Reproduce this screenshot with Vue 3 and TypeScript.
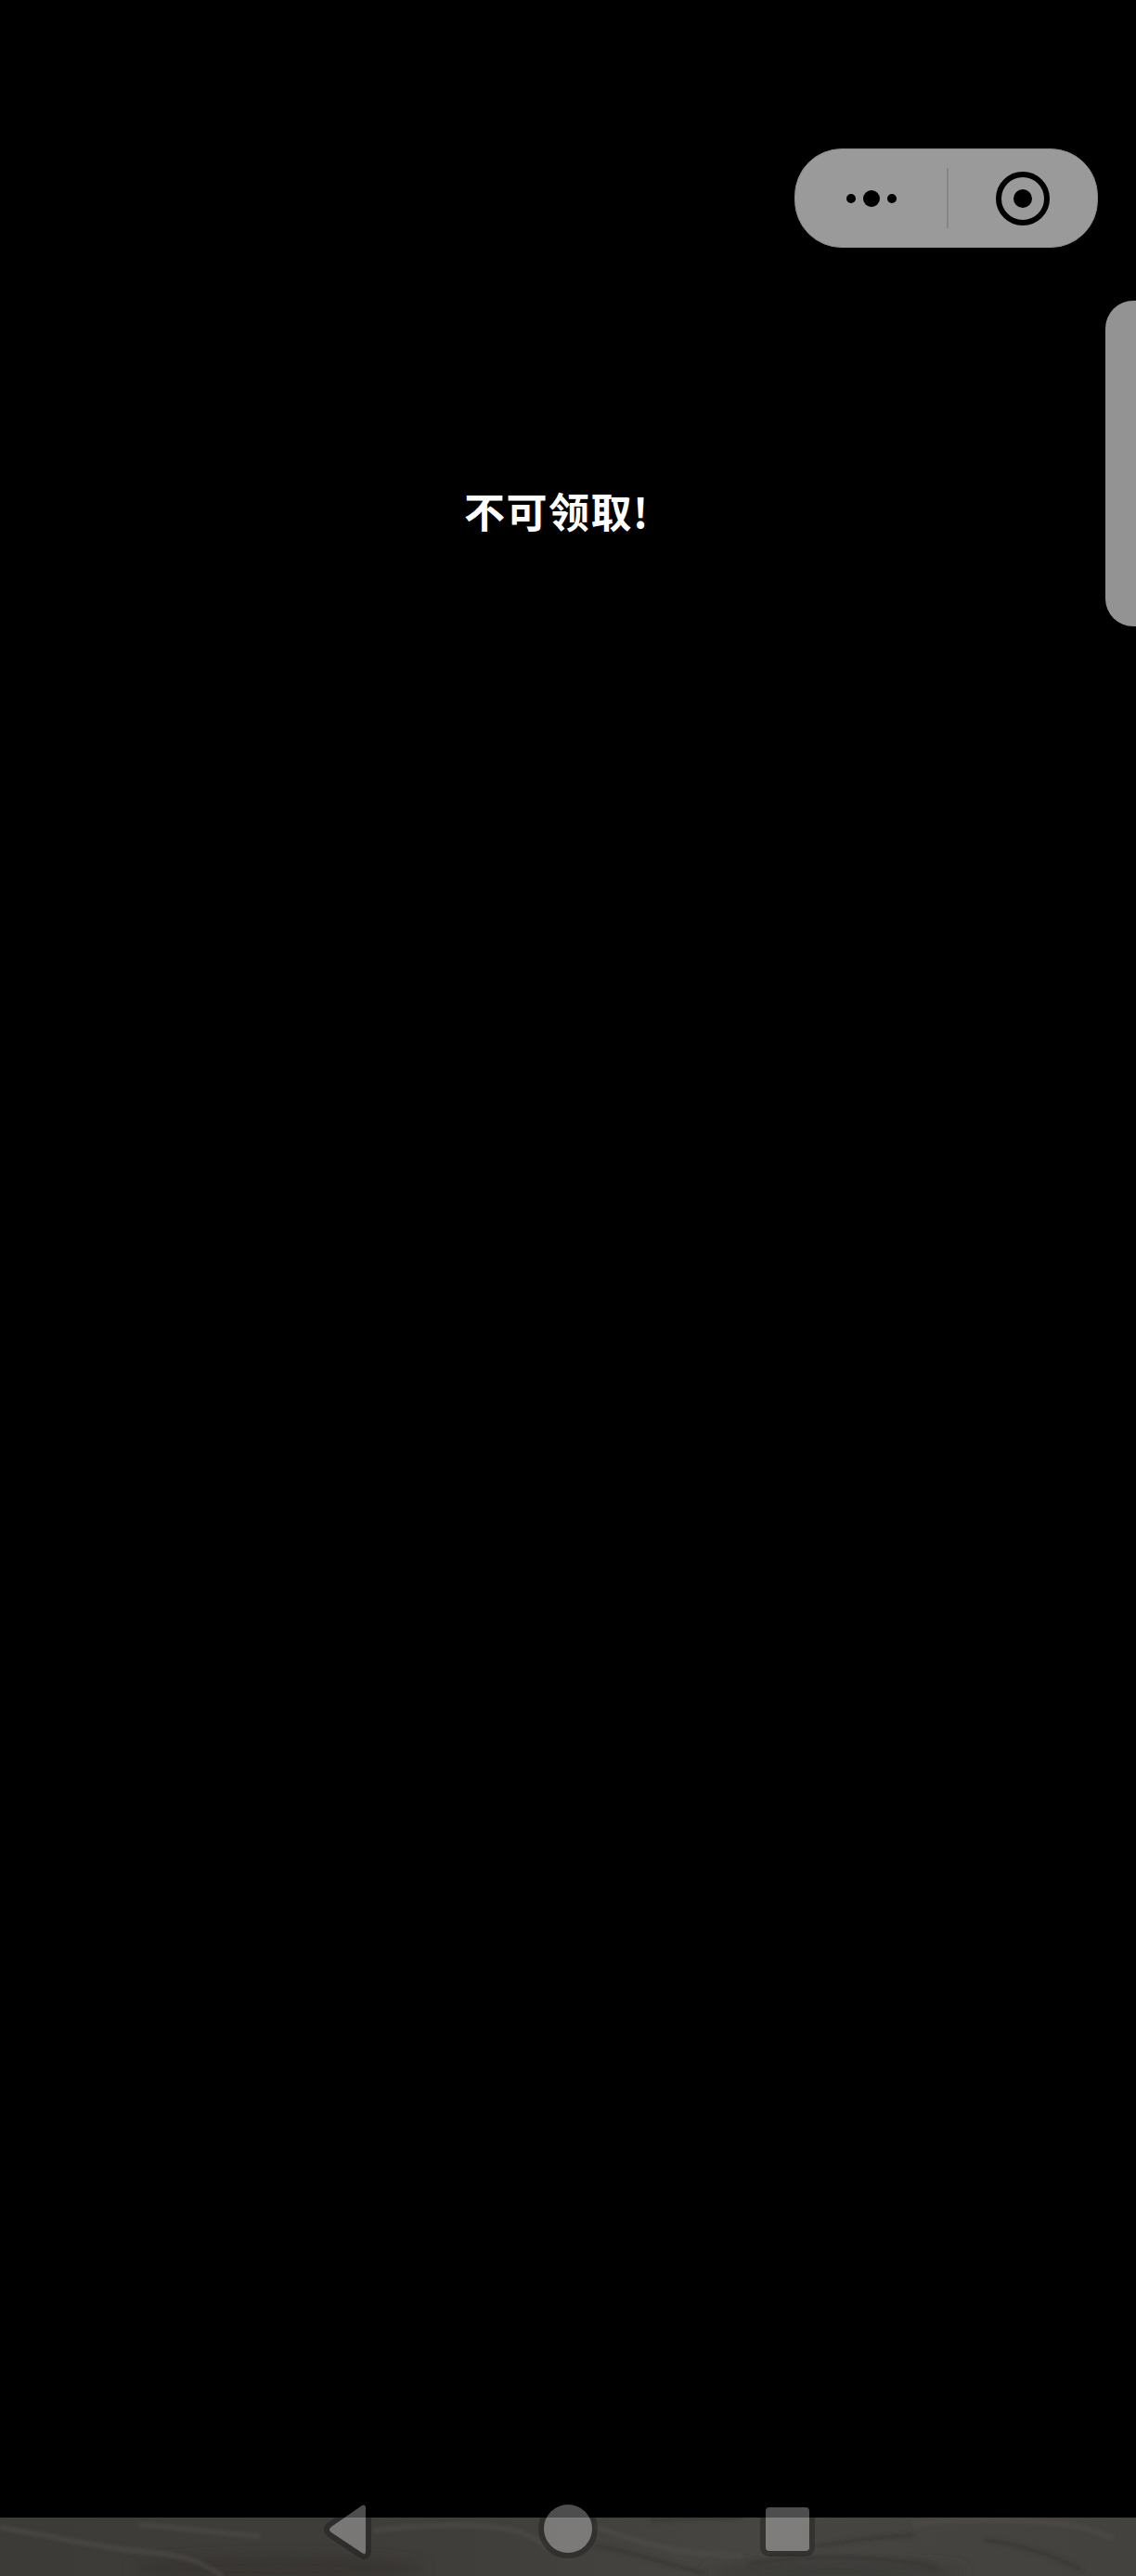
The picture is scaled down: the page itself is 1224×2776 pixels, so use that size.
<script setup lang="ts">
const lightStreaks: string[] = [
  'M0 11 C50 18 90 30 150 36 S215 48 240 63',
  'M402 14 C450 8 500 7 530 10 S575 20 590 33',
  'M983 7 C1020 2 1080 1 1125 5 S1170 12 1200 22',
  'M150 8 C190 10 230 16 280 20',
  'M640 10 C700 30 740 42 800 40',
]
const darkStreaks: string[] = [
  'M881 31 C910 26 940 21 985 19',
  'M1061 24 C1090 28 1130 38 1166 57',
  'M807 50 C840 44 900 40 960 46 S990 52 1010 56',
  'M700 4 C740 0 760 2 800 0',
  'M640 30 C680 36 700 46 760 60',
]
const triangle = 'M390 3 Q394 1 394 6 L394 52 Q394 57 390 54 L357 32 Q353 29 357 26 Z'
</script>

<template>
  <div class="page">
    <main class="screen">
      <div class="capsule">
        <div class="capsule-side capsule-more">
          <span class="dot"></span>
          <span class="dot dot-big"></span>
          <span class="dot"></span>
        </div>
        <div class="capsule-rule"></div>
        <div class="capsule-side capsule-target">
          <span class="target-ring"><span class="target-core"></span></span>
        </div>
      </div>
      <div class="side-tab"></div>
      <p class="message">不可领取!</p>
    </main>

    <footer class="navbar">
      <svg class="wallpaper" viewBox="0 0 1224 63" preserveAspectRatio="none" aria-hidden="true">
        <defs>
          <linearGradient id="strip" x1="0" x2="1" y1="0" y2="0">
            <stop offset="0" stop-color="#3c3b38" />
            <stop offset="0.4" stop-color="#403e3b" />
            <stop offset="0.65" stop-color="#474542" />
            <stop offset="1" stop-color="#44423f" />
          </linearGradient>
          <filter id="soft" x="-5%" y="-50%" width="110%" height="200%">
            <feGaussianBlur stdDeviation="2.2" />
          </filter>
          <filter id="softer" x="-5%" y="-50%" width="110%" height="200%">
            <feGaussianBlur stdDeviation="7" />
          </filter>
        </defs>
        <rect width="1224" height="63" fill="url(#strip)" />
        <ellipse cx="300" cy="55" rx="160" ry="14" fill="#373633" filter="url(#softer)" />
        <ellipse cx="900" cy="58" rx="140" ry="10" fill="#3b3a37" filter="url(#softer)" />
        <g fill="none" filter="url(#soft)">
          <path v-for="d in lightStreaks" :key="d" :d="d" stroke="#4f4d49" stroke-width="3" />
          <path v-for="d in darkStreaks" :key="d" :d="d" stroke="#353431" stroke-width="3" />
        </g>
      </svg>
      <svg class="nav-icons" viewBox="0 0 1224 79" aria-hidden="true">
        <defs>
          <mask id="outside-icons" maskUnits="userSpaceOnUse" x="0" y="0" width="1224" height="79">
            <rect width="1224" height="79" fill="#fff" />
            <g fill="#000">
              <path :d="triangle" />
              <circle cx="612" cy="28" r="26" />
              <rect x="825" y="5" width="47" height="47" rx="4" />
            </g>
          </mask>
        </defs>
        <g class="nav-halo" mask="url(#outside-icons)">
          <path :d="triangle" />
          <circle cx="612" cy="28" r="26" />
          <rect x="825" y="5" width="47" height="47" rx="4" />
        </g>
        <g class="nav-shape">
          <path :d="triangle" />
          <circle cx="612" cy="28" r="26" />
          <rect x="825" y="5" width="47" height="47" rx="4" />
        </g>
      </svg>
    </footer>
  </div>
</template>

<style scoped>
.page {
  display: flex;
  flex-direction: column;
  width: 1224px;
  height: 2776px;
  background: #000;
  overflow: hidden;
}

.screen {
  position: relative;
  flex: 1;
  min-height: 0;
}

.capsule {
  position: absolute;
  top: 160px;
  left: 856px;
  display: flex;
  align-items: center;
  width: 327px;
  height: 107px;
  box-sizing: border-box;
  border: 1px solid #8a8a8a;
  border-radius: 51px;
  background: #9a9a9a;
}

.capsule-side {
  display: flex;
  align-items: center;
  justify-content: center;
}

.capsule-more {
  gap: 8px;
  width: 162px;
  padding-left: 1px;
}

.capsule-target {
  flex: 1;
  padding-right: 1px;
}

.dot {
  width: 10px;
  height: 10px;
  border-radius: 50%;
  background: #000;
}

.dot-big {
  width: 18px;
  height: 18px;
}

.capsule-rule {
  width: 2px;
  height: 65px;
  background: #868686;
}

.target-ring {
  display: flex;
  align-items: center;
  justify-content: center;
  box-sizing: border-box;
  width: 58px;
  height: 58px;
  border: 6.5px solid #000;
  border-radius: 50%;
}

.target-core {
  width: 20px;
  height: 20px;
  border-radius: 50%;
  background: #000;
}

.side-tab {
  position: absolute;
  top: 324px;
  right: 0;
  width: 33px;
  height: 351px;
  border-radius: 30px 0 0 30px;
  background: #939393;
}

.message {
  position: absolute;
  top: 517px;
  left: 500px;
  margin: 0;
  color: #fff;
  font-family: "Noto Sans CJK SC", "Noto Sans", sans-serif;
  font-size: 44px;
  font-weight: 700;
  line-height: 66px;
  letter-spacing: 1.5px;
  white-space: nowrap;
}

.navbar {
  position: relative;
  flex: none;
  height: 63px;
}

.wallpaper {
  display: block;
  width: 100%;
  height: 100%;
}

.nav-icons {
  position: absolute;
  left: 0;
  bottom: 0;
  width: 1224px;
  height: 79px;
}

.nav-halo {
  fill: none;
  stroke: rgba(0, 0, 0, 0.25);
  stroke-width: 12;
}

.nav-shape {
  fill: rgba(255, 255, 255, 0.3);
}
</style>
